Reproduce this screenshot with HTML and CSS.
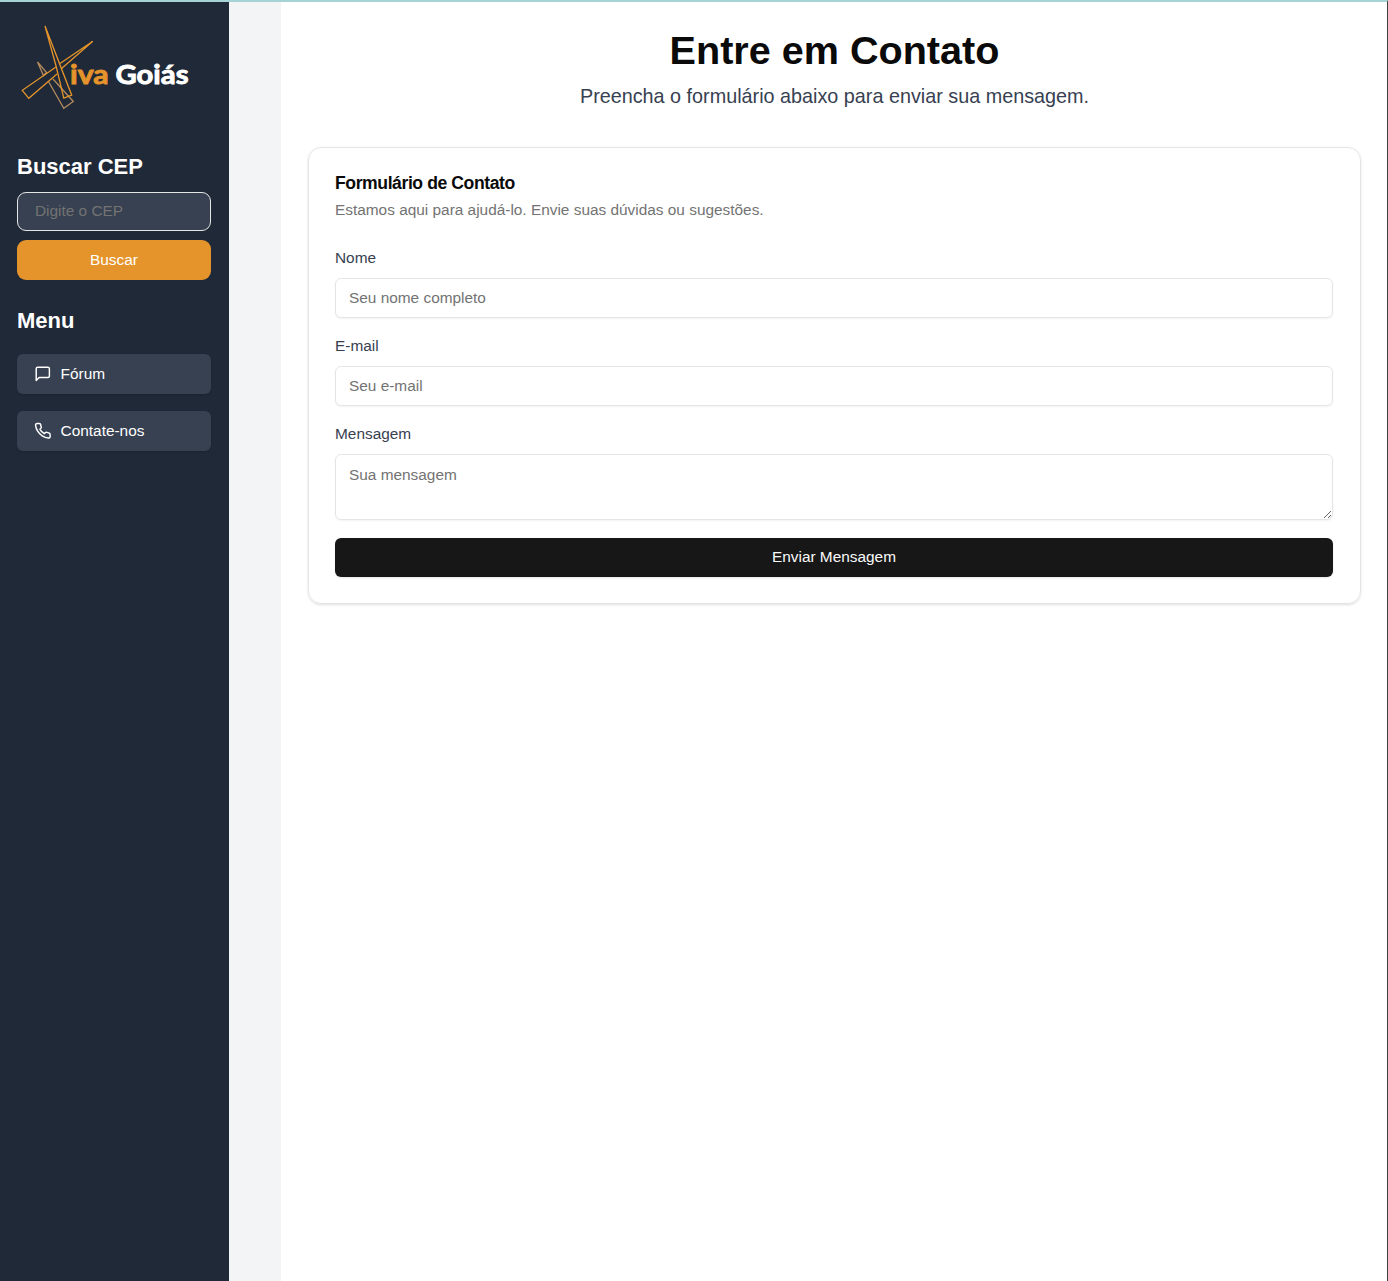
FILE: index.html
```html
<!DOCTYPE html>
<html lang="pt-BR">
<head>
<meta charset="utf-8">
<title>Xiva Goiás - Contato</title>
<link rel="stylesheet" href="styles.css">
</head>
<body>
<div class="app">
  <aside class="sidebar">
    <svg class="logo" width="194" height="110" viewBox="17 15 194 110" role="img" aria-label="Xiva Goiás">
      <g fill="none" stroke-width="1.3" stroke-linejoin="miter" stroke-miterlimit="2">
        <path stroke="#b38a5e" d="M37.5 62L46.5 72.5L43.5 75.5ZM48.5 81.5L63.8 108.3L73.3 101.5L53 79"/>
        <path stroke="#e5942b" d="M92.5 41.5L60 63.5M56 67L22.3 90.3L28.8 98.3L57 74M61 69L92.5 41.5"/>
        <path stroke="#e5942b" d="M45 26L71.7 95.2L63.8 98.2L56.3 67Z"/>
      </g>
      <g class="logo-text">
        <text x="70" y="84" fill="#e5942b" stroke="#e5942b" textLength="38.5" lengthAdjust="spacingAndGlyphs">iva</text>
        <text x="115.5" y="84" fill="#ffffff" stroke="#ffffff" textLength="73" lengthAdjust="spacingAndGlyphs">Goiás</text>
      </g>
    </svg>
    <section class="search">
      <h2 class="side-title">Buscar CEP</h2>
      <input class="search-input" type="text" placeholder="Digite o CEP">
      <button class="search-button">Buscar</button>
    </section>
    <nav class="menu">
      <h2 class="side-title">Menu</h2>
      <a class="menu-item">
        <svg class="icon" viewBox="0 0 24 24"><path d="M21 15a2 2 0 0 1-2 2H7l-4 4V5a2 2 0 0 1 2-2h14a2 2 0 0 1 2 2z"/></svg>
        <span>Fórum</span>
      </a>
      <a class="menu-item">
        <svg class="icon" viewBox="0 0 24 24"><path d="M22 16.92v3a2 2 0 0 1-2.18 2 19.79 19.79 0 0 1-8.63-3.07 19.5 19.5 0 0 1-6-6 19.79 19.79 0 0 1-3.07-8.67A2 2 0 0 1 4.11 2h3a2 2 0 0 1 2 1.72 12.84 12.84 0 0 0 .7 2.81 2 2 0 0 1-.45 2.11L8.09 9.91a16 16 0 0 0 6 6l1.27-1.27a2 2 0 0 1 2.11-.45 12.84 12.84 0 0 0 2.81.7A2 2 0 0 1 22 16.92z"/></svg>
        <span>Contate-nos</span>
      </a>
    </nav>
  </aside>
  <main class="main">
    <div class="page">
      <h1 class="page-title">Entre em Contato</h1>
      <p class="page-lead">Preencha o formulário abaixo para enviar sua mensagem.</p>
      <div class="card">
        <h3 class="card-title">Formulário de Contato</h3>
        <p class="card-description">Estamos aqui para ajudá-lo. Envie suas dúvidas ou sugestões.</p>
        <form class="form">
          <label class="field">Nome
            <input class="control" type="text" placeholder="Seu nome completo">
          </label>
          <label class="field">E-mail
            <input class="control" type="email" placeholder="Seu e-mail">
          </label>
          <label class="field">Mensagem
            <textarea class="control message" placeholder="Sua mensagem"></textarea>
          </label>
          <button class="submit" type="button">Enviar Mensagem</button>
        </form>
      </div>
    </div>
  </main>
</div>
</body>
</html>
```
FILE: styles.css
```css
* {
  box-sizing: border-box;
  margin: 0;
}

body {
  font: 15.4px/22px "Liberation Sans", Arial, sans-serif;
  color: #0a0a0a;
}

input,
textarea,
button {
  font: inherit;
}

.app {
  display: flex;
  height: 1281px;
  overflow: hidden;
  border-top: 2px solid #a5d3d6;
  border-right: 1px solid #404040;
}

.sidebar {
  flex: none;
  width: 229px;
  padding: 13px 18px 0 17px;
  background: #1f2937;
  color: #fff;
}

.logo {
  display: block;
}

.logo-text {
  font: 700 27px Lato, sans-serif;
  stroke-width: 0.9;
}

.side-title {
  font-size: 22px;
  line-height: 31px;
  font-weight: 700;
}

.search {
  display: flex;
  flex-direction: column;
  padding-top: 26px;
}

.search-input {
  height: 39px;
  margin-top: 10px;
  padding: 0 17px 2px;
  border: 1px solid #e5e5e5;
  border-radius: 9px;
  background: #374151;
  color: #fff;
}

.search-input::placeholder {
  color: #737373;
}

.search-button {
  height: 40px;
  margin-top: 9px;
  padding: 0;
  border: 0;
  border-radius: 9px;
  background: #e5942b;
  color: #fff;
}

.menu {
  display: flex;
  flex-direction: column;
  gap: 17px;
  padding-top: 25px;
}

.menu .side-title {
  margin-bottom: 1px;
}

.menu-item {
  display: flex;
  align-items: center;
  gap: 9px;
  height: 40px;
  padding-left: 17px;
  border-radius: 6px;
  background: #374151;
  box-shadow: 0 1px 2px rgb(0 0 0 / 10%);
}

.icon {
  width: 17.6px;
  height: 17.6px;
  fill: none;
  stroke: #fff;
  stroke-width: 2;
  stroke-linecap: round;
  stroke-linejoin: round;
}

.main {
  flex: 1;
  padding-left: 52px;
  background: #f3f4f6;
}

.page {
  height: 100%;
  padding: 26px 26px 0 27px;
  background: #fff;
}

.page-title {
  font-size: 39.6px;
  line-height: 44px;
  font-weight: 700;
  text-align: center;
}

.page-lead {
  margin: 9px 0 35px;
  font-size: 19.8px;
  line-height: 31px;
  text-align: center;
  color: #374151;
}

.card {
  height: 457px;
  padding: 26px 27px 0 26px;
  border: 1px solid #e5e5e5;
  border-radius: 13px;
  box-shadow: 0 1px 3px rgb(0 0 0 / 10%), 0 1px 2px -1px rgb(0 0 0 / 10%);
}

.card-title {
  font-size: 17.6px;
  line-height: 18px;
  font-weight: 600;
  letter-spacing: -0.42px;
}

.card-description {
  margin-top: 7px;
  color: #737373;
}

.form {
  display: flex;
  flex-direction: column;
  gap: 17px;
  padding-top: 26px;
}

.field {
  display: flex;
  flex-direction: column;
  gap: 9px;
  color: #374151;
}

.control {
  height: 40px;
  padding: 0 13px 1px;
  border: 1px solid #e5e5e5;
  border-radius: 6px;
  background: #fff;
  color: #0a0a0a;
  box-shadow: 0 1px 2px rgb(0 0 0 / 5%);
}

.control::placeholder {
  color: #737373;
}

.message {
  height: 66px;
  padding-top: 9px;
  resize: vertical;
}

.submit {
  height: 39px;
  margin-top: 1px;
  padding: 0 0 2px;
  border: 0;
  border-radius: 6px;
  background: #171717;
  color: #fafafa;
  box-shadow: 0 1px 2px rgb(0 0 0 / 10%);
}
```
